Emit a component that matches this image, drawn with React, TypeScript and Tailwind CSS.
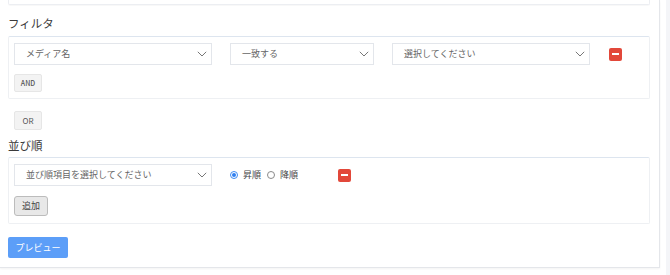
import React from 'react'

const font = { fontFamily: '"Noto Sans CJK JP", "Noto Sans", sans-serif' }

function Chevron() {
  return (
    <svg width="10" height="6" viewBox="0 0 10 6" className="shrink-0">
      <polyline points="0.8,0.8 5,5 9.2,0.8" fill="none" stroke="#777" strokeWidth="1" />
    </svg>
  )
}

function Select({ label, width }: { label: string; width: string }) {
  return (
    <div
      className={`${width} h-[22px] shrink-0 flex items-center justify-between pl-[11px] pr-[4px] border border-[#e3e6eb] bg-white text-[9px] text-[#666]`}
    >
      <span>{label}</span>
      <Chevron />
    </div>
  )
}

function Minus() {
  return (
    <div className="w-[13px] h-[13px] shrink-0 rounded-[2px] bg-[#e2483a] flex items-center justify-center">
      <div className="w-[7px] h-[2px] bg-white" />
    </div>
  )
}

function Radio({ checked, label }: { checked?: boolean; label: string }) {
  return (
    <div className="flex items-center gap-[5px]">
      <span
        className={`w-[8px] h-[8px] rounded-full flex items-center justify-center border ${
          checked ? 'border-[#3d8bf2] bg-white' : 'border-[#8a8a8a] bg-white'
        }`}
      >
        {checked && <span className="w-[4px] h-[4px] rounded-full bg-[#2f7ff0]" />}
      </span>
      <span className="text-[9px] text-[#444]">{label}</span>
    </div>
  )
}

export default function App() {
  return (
    <div className="w-[670px] h-[275px] bg-white flex overflow-hidden" style={font}>
      {/* main card */}
      <div className="w-[660px] h-[268px] shrink-0 bg-white border-r border-b border-[#e4e6ea] shadow-[0_1px_2px_rgba(0,0,0,0.05)] pl-[8px] pr-[9px]">
        <div className="h-[5px] border border-t-0 border-[#eceef2] rounded-b-[2px] shadow-[0_1px_1px_rgba(0,0,0,0.03)]" />

        <h2 className="mt-[9px] mb-[4px] text-[11.5px] leading-[18px] text-[#3a3a3a]">フィルタ</h2>

        {/* filter box */}
        <div className="border border-[#eef0f3] border-t-[#dde5ef] rounded-[2px] pl-[5px] pt-[6px] pb-[6px]">
          <div className="flex items-center">
            <Select label="メディア名" width="w-[198px]" />
            <div className="ml-[18px]">
              <Select label="一致する" width="w-[144px]" />
            </div>
            <div className="ml-[18px]">
              <Select label="選択してください" width="w-[198px]" />
            </div>
            <div className="ml-[19px]">
              <Minus />
            </div>
          </div>
          <button className="mt-[9px] w-[28px] h-[18px] bg-[#f3f3f3] border border-[#e6e6e6] rounded-[2px] text-[7px] font-medium text-[#555] flex items-center justify-center">
            AND
          </button>
        </div>

        <button className="mt-[12px] ml-[6px] w-[28px] h-[19px] bg-[#f3f3f3] border border-[#e6e6e6] rounded-[2px] text-[8px] text-[#555] flex items-center justify-center">
          OR
        </button>

        <h2 className="mt-[6px] mb-[3px] text-[11.5px] leading-[18px] text-[#3a3a3a]">並び順</h2>

        {/* sort box */}
        <div className="border border-[#eef0f3] border-t-[#dde5ef] rounded-[2px] pl-[5px] pt-[6px] pb-[7px]">
          <div className="flex items-center">
            <Select label="並び順項目を選択してください" width="w-[198px]" />
            <div className="ml-[18px] flex items-center gap-[6px]">
              <Radio checked label="昇順" />
              <Radio label="降順" />
            </div>
            <div className="ml-[40px]">
              <Minus />
            </div>
          </div>
          <button className="mt-[10px] w-[34px] h-[20px] bg-[#e8e8e8] border border-[#bcbcbc] rounded-[3px] text-[9px] text-[#444] flex items-center justify-center">
            追加
          </button>
        </div>

        <button className="mt-[13px] w-[60px] h-[21px] bg-[#5c9ef8] rounded-[2px] text-[9px] text-white flex items-center justify-center">
          プレビュー
        </button>
      </div>
      <div className="w-[6px] shrink-0" />
      <div className="flex-1 bg-[#f4f5f8]" />
    </div>
  )
}
